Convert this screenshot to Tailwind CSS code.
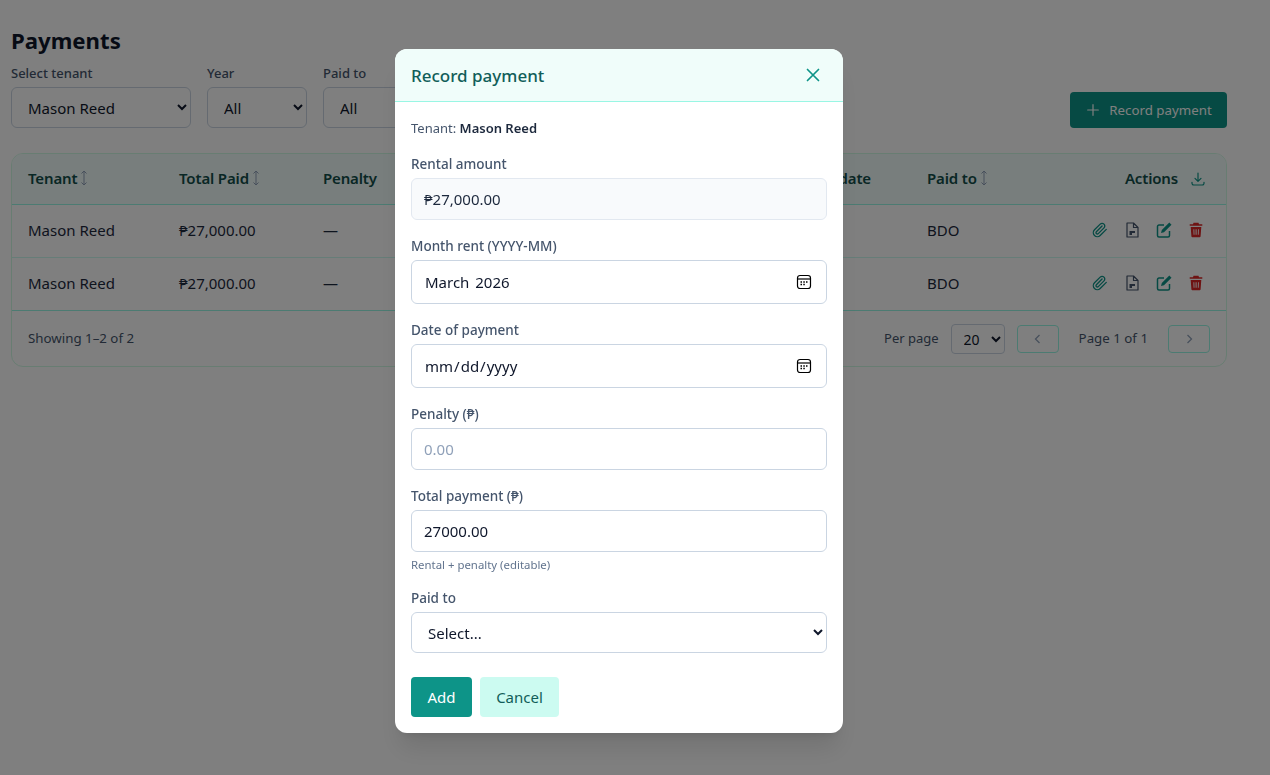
<!DOCTYPE html>
<html lang="en">
<head>
<meta charset="utf-8">
<script src="https://cdn.jsdelivr.net/npm/@tailwindcss/browser@4"></script>
<title>Payments</title>
</head>
<body class="bg-white font-['Noto_Sans','Open_Sans',sans-serif] text-slate-800 h-[775px] overflow-hidden">
<main class="w-[1238px] px-[11px] pt-[25px]">
  <h1 class="text-[22.2px] leading-8 font-bold text-slate-900 mb-[7px]">Payments</h1>
  <div class="flex items-end justify-between mb-[25px]">
    <div class="flex gap-4">
      <label class="block w-[180px]"><span class="block text-[13px] leading-[18px] font-medium text-slate-600 mb-[5px]">Select tenant</span>
        <select class="w-full h-[41px] pl-3 pr-1 border border-slate-300 rounded-md text-[15px] text-slate-900 bg-white"><option>Mason Reed</option></select></label>
      <label class="block w-[100px]"><span class="block text-[13px] leading-[18px] font-medium text-slate-600 mb-[5px]">Year</span>
        <select class="w-full h-[41px] pl-3 pr-1 border border-slate-300 rounded-md text-[15px] text-slate-900 bg-white"><option>All</option></select></label>
      <label class="block w-[100px]"><span class="block text-[13px] leading-[18px] font-medium text-slate-600 mb-[5px]">Paid to</span>
        <select class="w-full h-[41px] pl-3 pr-1 border border-slate-300 rounded-md text-[15px] text-slate-900 bg-white"><option>All</option></select></label>
    </div>
    <button class="flex items-center gap-2 h-9 w-[157px] justify-center rounded bg-[#0d9488] text-white text-[13.3px]">
      <svg class="w-4 h-4" viewBox="0 0 24 24" fill="none" stroke="currentColor" stroke-width="1.8" stroke-linecap="round"><path d="M12 4v16M4 12h16"/></svg>
      <span class="pt-px">Record payment</span>
    </button>
  </div>

  <div class="border border-[#d1fae5] rounded-xl overflow-hidden">
    <table class="w-full table-fixed text-[15px] text-left">
      <colgroup><col class="w-[151px]"><col class="w-[144px]"><col class="w-[200px]"><col class="w-[404px]"><col class="w-[140px]"><col></colgroup>
      <thead class="bg-[#f0fdfa] text-[#134e4a]">
        <tr class="h-[50px] border-b border-[#99f6e4]">
          <th class="pl-4 pb-[2px] font-semibold tracking-[-0.01em]"><span class="inline-flex items-center gap-[2px]">Tenant <svg class="w-[10px] h-4 text-slate-400" viewBox="0 0 10 16" fill="none" stroke="currentColor" stroke-width="1"><path d="M5 1v14M2.500 3.500 5 1l2.500 2.500M2.500 12.500 5 15l2.500-2.500"/></svg></span></th>
          <th class="pl-4 pb-[2px] font-semibold tracking-[-0.01em]"><span class="inline-flex items-center gap-[2px]">Total Paid <svg class="w-[10px] h-4 text-slate-400" viewBox="0 0 10 16" fill="none" stroke="currentColor" stroke-width="1"><path d="M5 1v14M2.500 3.500 5 1l2.500 2.500M2.500 12.500 5 15l2.500-2.500"/></svg></span></th>
          <th class="pl-4 pb-[2px] font-semibold tracking-[-0.01em]">Penalty</th>
          <th class="pr-[40px] pb-[2px] text-right font-semibold tracking-[-0.01em]">Payment date</th>
          <th class="pl-4 pb-[2px] font-semibold tracking-[-0.01em]"><span class="inline-flex items-center gap-[2px]">Paid to <svg class="w-[10px] h-4 text-slate-400" viewBox="0 0 10 16" fill="none" stroke="currentColor" stroke-width="1"><path d="M5 1v14M2.500 3.500 5 1l2.500 2.500M2.500 12.500 5 15l2.500-2.500"/></svg></span></th>
          <th class="pr-5 font-semibold tracking-[-0.01em]"><span class="flex items-center justify-end gap-3"><span class="mb-[2px]">Actions</span>
            <svg class="w-4 h-4 text-[#0d9488]" viewBox="0 0 24 24" fill="none" stroke="currentColor" stroke-width="1.8" stroke-linecap="round" stroke-linejoin="round"><path d="M12 3v12M7.500 11l4.500 4.500 4.500-4.500M3 17v1.500a2.500 2.500 0 0 0 2.500 2.500h13a2.500 2.500 0 0 0 2.500-2.500V17"/></svg></span></th>
        </tr>
      </thead>
      <tbody>
        <tr class="h-[53px] border-b border-[#ccfbf1]">
          <td class="pl-4">Mason Reed</td><td class="pl-4">₱27,000.00</td><td class="pl-4">—</td><td></td><td class="pl-4">BDO</td>
          <td class="pr-[22px]"><div class="flex justify-end gap-4 mb-[2px]">
            <svg class="w-4 h-4 text-[#0d9488]" viewBox="0 0 24 24" fill="none" stroke="currentColor" stroke-width="2" stroke-linecap="round" stroke-linejoin="round"><path d="m21.440 11.050-9.190 9.190a6 6 0 0 1-8.490-8.490l8.570-8.570A4 4 0 1 1 18 8.840l-8.590 8.570a2 2 0 0 1-2.830-2.830l8.490-8.480"/></svg>
            <svg class="w-4 h-4 text-slate-600" viewBox="0 0 16 16" fill="none" stroke="currentColor" stroke-width="1.200" stroke-linejoin="round"><path d="M3 1h6.500L14 5.500V15H3zM9.500 1v4.500H14"/><path d="M5.500 9H11v2H8v2H5.500z" fill="currentColor" stroke="none"/></svg>
            <svg class="w-4 h-4 text-[#0d9488]" viewBox="0 0 16 16" fill="none"><path d="M8 3H3a1.500 1.500 0 0 0-1.500 1.500v9A1.500 1.500 0 0 0 3 15h9a1.500 1.500 0 0 0 1.500-1.500V9" stroke="currentColor" stroke-width="1.500"/><path d="M13.300.6 15.500 2.800 8 10.300l-3 .8.800-3z" fill="currentColor"/></svg>
            <svg class="w-4 h-4 text-[#dc2626]" viewBox="0 0 16 16" fill="currentColor"><path d="M5.500.8h5l.5 1.400h3.300v1.600H1.700V2.200H5zM2.700 5h10.600l-.7 9.300a1 1 0 0 1-1 .9H4.400a1 1 0 0 1-1-.9zm2.700 2.200.2 5.600h.9l-.2-5.600zm2.200 0v5.600h1V7.200zm2.400 0-.2 5.600h.9l.2-5.600z" fill-rule="evenodd"/></svg>
          </div></td>
        </tr>
        <tr class="h-[53px] border-b border-[#99f6e4]">
          <td class="pl-4">Mason Reed</td><td class="pl-4">₱27,000.00</td><td class="pl-4">—</td><td></td><td class="pl-4">BDO</td>
          <td class="pr-[22px]"><div class="flex justify-end gap-4 mb-[2px]">
            <svg class="w-4 h-4 text-[#0d9488]" viewBox="0 0 24 24" fill="none" stroke="currentColor" stroke-width="2" stroke-linecap="round" stroke-linejoin="round"><path d="m21.440 11.050-9.190 9.190a6 6 0 0 1-8.490-8.490l8.570-8.570A4 4 0 1 1 18 8.840l-8.590 8.570a2 2 0 0 1-2.830-2.830l8.490-8.480"/></svg>
            <svg class="w-4 h-4 text-slate-600" viewBox="0 0 16 16" fill="none" stroke="currentColor" stroke-width="1.200" stroke-linejoin="round"><path d="M3 1h6.500L14 5.500V15H3zM9.500 1v4.500H14"/><path d="M5.500 9H11v2H8v2H5.500z" fill="currentColor" stroke="none"/></svg>
            <svg class="w-4 h-4 text-[#0d9488]" viewBox="0 0 16 16" fill="none"><path d="M8 3H3a1.500 1.500 0 0 0-1.500 1.500v9A1.500 1.500 0 0 0 3 15h9a1.500 1.500 0 0 0 1.500-1.500V9" stroke="currentColor" stroke-width="1.500"/><path d="M13.300.6 15.500 2.800 8 10.300l-3 .8.800-3z" fill="currentColor"/></svg>
            <svg class="w-4 h-4 text-[#dc2626]" viewBox="0 0 16 16" fill="currentColor"><path d="M5.500.8h5l.5 1.400h3.300v1.600H1.700V2.200H5zM2.700 5h10.600l-.7 9.300a1 1 0 0 1-1 .9H4.400a1 1 0 0 1-1-.9zm2.700 2.200.2 5.600h.9l-.2-5.600zm2.200 0v5.600h1V7.200zm2.400 0-.2 5.600h.9l.2-5.600z" fill-rule="evenodd"/></svg>
          </div></td>
        </tr>
      </tbody>
    </table>
    <div class="flex items-center justify-between h-[55px] pl-4 pr-4 pt-[2px] text-[13.3px] text-slate-600">
      <span>Showing 1–2 of 2</span>
      <div class="flex items-center">
        <span class="mr-3 text-[13px]">Per page</span>
        <select class="w-[54px] h-[30px] pl-2 border border-slate-300 rounded text-sm text-slate-900 bg-white mr-3"><option>20</option></select>
        <button class="w-[42px] h-7 border border-[#99f6e4] rounded flex items-center justify-center text-slate-400 mr-5"><svg class="w-3 h-3" viewBox="0 0 12 12" fill="none" stroke="currentColor" stroke-width="1.300"><path d="M7.500 2 3.500 6l4 4"/></svg></button>
        <span class="mr-5">Page 1 of 1</span>
        <button class="w-[42px] h-7 border border-[#99f6e4] rounded flex items-center justify-center text-slate-400"><svg class="w-3 h-3" viewBox="0 0 12 12" fill="none" stroke="currentColor" stroke-width="1.300"><path d="M4.500 2l4 4-4 4"/></svg></button>
      </div>
    </div>
  </div>
</main>

<div class="fixed inset-0 bg-black/50">
  <div class="w-[1238px] flex justify-center pt-[49px]">
    <section class="w-[448px] h-[684px] bg-white rounded-xl shadow-xl overflow-hidden">
      <header class="h-[53px] flex items-center justify-between pl-4 pr-5 bg-[#f0fdfa] border-b border-[#99f6e4]">
        <h2 class="text-[17px] font-medium text-[#115e59] pt-px">Record payment</h2>
        <svg class="w-5 h-5 text-[#0d9488]" viewBox="0 0 20 20" fill="none" stroke="currentColor" stroke-width="1.700" stroke-linecap="round"><path d="M4.500 4.500l11 11M15.500 4.500l-11 11"/></svg>
      </header>
      <form class="p-4 text-[13.5px]">
        <p class="leading-5 text-[13px] text-slate-600 mb-4">Tenant: <strong class="font-semibold text-slate-800">Mason Reed</strong></p>
        <div class="mb-4">
          <span class="block leading-5 font-medium text-slate-600 mb-1">Rental amount</span>
          <div class="h-[42px] flex items-center px-3 pt-px border border-slate-200 rounded-md bg-slate-50 text-[15px] text-slate-800">₱27,000.00</div>
        </div>
        <div class="mb-4">
          <label class="block leading-5 font-medium text-slate-600 mb-1">Month rent (YYYY-MM)</label>
          <div class="relative">
            <input type="text" value="March 2026" class="w-full h-[44px] pl-[13px] border border-slate-300 rounded-md text-[15px] text-slate-900 [word-spacing:2px]">
            <svg class="absolute right-[15px] top-[14px] w-4 h-4 text-black" viewBox="0 0 16 16" fill="none" stroke="currentColor" stroke-width="1.200"><rect x="1.500" y="1.500" width="13" height="13" rx="2.500"/><path d="M1.500 5h13"/><path d="M4.500 8h1.500M7.300 8h1.500M10 8h1.500M4.500 10.500h1.500M7.300 10.500h1.500" stroke-width="1.400"/></svg>
          </div>
        </div>
        <div class="mb-4">
          <label class="block leading-5 font-medium text-slate-600 mb-1">Date of payment</label>
          <div class="relative">
            <input type="date" class="w-full h-[44px] pl-3 pr-[13px] pt-px border border-slate-300 rounded-md text-[15px] text-slate-900 [&::-webkit-calendar-picker-indicator]:opacity-0">
            <svg class="absolute right-[15px] top-[14px] w-4 h-4 text-black" viewBox="0 0 16 16" fill="none" stroke="currentColor" stroke-width="1.200"><rect x="1.500" y="1.500" width="13" height="13" rx="2.500"/><path d="M1.500 5h13"/><path d="M4.500 8h1.500M7.300 8h1.500M10 8h1.500M4.500 10.500h1.500M7.300 10.500h1.500" stroke-width="1.400"/></svg>
          </div>
        </div>
        <div class="mb-4">
          <label class="block leading-5 font-medium text-slate-600 mb-1">Penalty (₱)</label>
          <input type="text" placeholder="0.00" class="w-full h-[42px] px-3 border border-slate-300 rounded-md text-[15px] text-slate-900 placeholder:text-slate-400">
        </div>
        <div class="mb-4">
          <label class="block leading-5 font-medium text-slate-600 mb-1">Total payment (₱)</label>
          <input type="text" value="27000.00" class="w-full h-[42px] px-3 border border-slate-300 rounded-md text-[15px] text-slate-900">
          <p class="mt-1 pt-px text-[11.400px] leading-[15px] text-slate-500">Rental + penalty (editable)</p>
        </div>
        <div class="mb-6">
          <label class="block leading-5 font-medium text-slate-600 mb-1">Paid to</label>
          <select class="w-full h-[41px] pl-3 border border-slate-300 rounded-md text-[15px] text-slate-900 bg-white"><option>Select...</option></select>
        </div>
        <div class="flex gap-2">
          <button type="button" class="w-[61px] h-10 pt-px rounded bg-[#0d9488] text-white text-[15px]">Add</button>
          <button type="button" class="w-[79px] h-10 pt-px rounded bg-[#ccfbf1] text-[#115e59] text-[15px]">Cancel</button>
        </div>
      </form>
    </section>
  </div>
</div>
</body>
</html>
